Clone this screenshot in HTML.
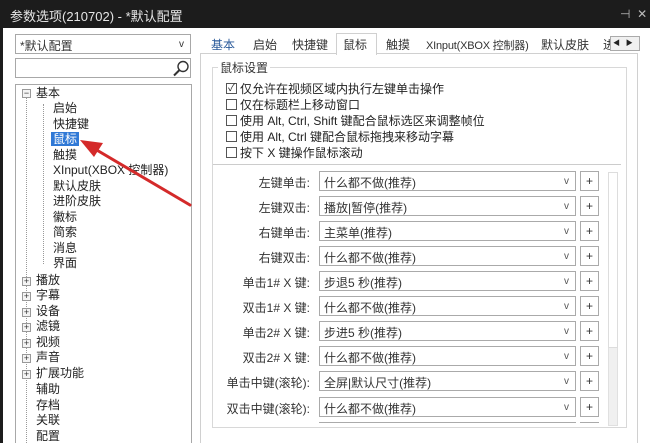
<!DOCTYPE html>
<html><head><meta charset="utf-8"><style>
*{box-sizing:border-box;margin:0;padding:0}
html,body{width:650px;height:443px;overflow:hidden}
body{background:#fff;font-family:"Liberation Sans","Noto Sans CJK SC",sans-serif;font-size:12px;color:#222;position:relative}
.a{position:absolute;white-space:nowrap}
.title{left:0;top:0;width:650px;height:28px;background:#1c1c1c;color:#e6e6e6;font-size:13px;padding:6px 0 0 10px}
.box{position:absolute;border:1px solid #a8a8a8;background:#fff}
.t{position:absolute;font-size:12px;line-height:14px}
.pm{position:absolute;width:9px;height:9px;border:1px solid #999;background:#f4f4f4;font-size:9px;line-height:7px;text-align:center;color:#333}
.tab{position:absolute;top:36px;font-size:12px;color:#333}
.cb{position:absolute;width:11px;height:11px;border:1px solid #555;background:#fff}
.lbl{position:absolute;width:120px;text-align:right;font-size:12px;color:#333}
.sel{position:absolute;left:319px;width:257px;height:20px;border:1px solid #aaa;background:#fff;font-size:12px;padding:2px 4px;color:#333}
.sel b{position:absolute;right:6px;top:4px;font-weight:normal;font-size:10px;color:#555}
.pl{position:absolute;left:580px;width:19px;height:20px;border:1px solid #aaa;background:#fff;text-align:center;font-size:12px;line-height:18px;color:#333}
</style></head><body>
<div class="a title">参数选项(210702) - *默认配置</div>
<div class="a" style="left:620px;top:7px;color:#bbb;font-size:12px">⊣ &nbsp;✕</div>
<div class="a" style="left:0;top:28px;width:3px;height:415px;background:#1c1c1c"></div>

<div class="box" style="left:15px;top:34px;width:176px;height:20px;padding:2px 4px;color:#333">*默认配置<span style="position:absolute;right:6px;top:4px;font-size:10px">v</span></div>
<div class="box" style="left:15px;top:58px;width:176px;height:20px"></div>
<svg class="a" style="left:172px;top:60px" width="18" height="17"><circle cx="11" cy="6.5" r="5" fill="none" stroke="#333" stroke-width="1.4"/><line x1="7.5" y1="10" x2="2" y2="15.5" stroke="#333" stroke-width="2"/></svg>
<div class="box" style="left:15px;top:84px;width:177px;height:359px;border-bottom:none"></div>
<div class="a" style="left:26px;top:98px;height:345px;border-left:1px dotted #999"></div>
<div class="a" style="left:43px;top:104px;height:160px;border-left:1px dotted #999"></div>
<div class="pm" style="left:22px;top:89px">−</div>
<div class="t" style="left:36px;top:86px">基本</div>
<div class="t" style="left:53px;top:101px">启始</div>
<div class="t" style="left:53px;top:117px">快捷键</div>
<div class="t" style="left:51px;top:132px;background:#3079d6;color:#fff;padding:0 2px">鼠标</div>
<div class="t" style="left:53px;top:148px">触摸</div>
<div class="t" style="left:53px;top:163px">XInput(XBOX 控制器)</div>
<div class="t" style="left:53px;top:179px">默认皮肤</div>
<div class="t" style="left:53px;top:194px">进阶皮肤</div>
<div class="t" style="left:53px;top:210px">徽标</div>
<div class="t" style="left:53px;top:225px">简索</div>
<div class="t" style="left:53px;top:241px">消息</div>
<div class="t" style="left:53px;top:256px">界面</div>
<div class="pm" style="left:22px;top:277px">+</div><div class="t" style="left:36px;top:273px">播放</div>
<div class="pm" style="left:22px;top:292px">+</div><div class="t" style="left:36px;top:288px">字幕</div>
<div class="pm" style="left:22px;top:308px">+</div><div class="t" style="left:36px;top:304px">设备</div>
<div class="pm" style="left:22px;top:323px">+</div><div class="t" style="left:36px;top:319px">滤镜</div>
<div class="pm" style="left:22px;top:339px">+</div><div class="t" style="left:36px;top:335px">视频</div>
<div class="pm" style="left:22px;top:354px">+</div><div class="t" style="left:36px;top:350px">声音</div>
<div class="pm" style="left:22px;top:370px">+</div><div class="t" style="left:36px;top:366px">扩展功能</div>
<div class="t" style="left:36px;top:382px">辅助</div>
<div class="t" style="left:36px;top:398px">存档</div>
<div class="t" style="left:36px;top:413px">关联</div>
<div class="t" style="left:36px;top:429px">配置</div>

<div class="a" style="left:200px;top:53px;width:438px;height:390px;border:1px solid #d0d0d0;border-bottom:none"></div>
<div class="a" style="left:336px;top:33px;width:41px;height:22px;border:1px solid #d0d0d0;border-bottom:none;background:#fff"></div>
<div class="tab" style="left:211px;color:#2a5a9a">基本</div>
<div class="tab" style="left:253px">启始</div>
<div class="tab" style="left:292px">快捷键</div>
<div class="tab" style="left:343px">鼠标</div>
<div class="tab" style="left:386px">触摸</div>
<div class="tab" style="left:426px;font-size:11px;top:37px;letter-spacing:-0.2px">XInput(XBOX 控制器)</div>
<div class="tab" style="left:541px">默认皮肤</div>
<div class="tab" style="left:603px;width:7px;overflow:hidden">进</div>
<div class="a" style="left:610px;top:36px;width:30px;height:15px;border:1px solid #aaa;background:#f0f0f0;font-size:7px;line-height:13px;color:#222">&nbsp;◀ &nbsp;&nbsp;▶</div>

<div class="a" style="left:212px;top:67px;width:415px;height:361px;border:1px solid #d8d8d8"></div>
<div class="a" style="left:218px;top:59px;background:#fff;padding:0 2px;font-size:12px;color:#333">鼠标设置</div>
<div class="cb" style="left:226px;top:83px;font-size:10px;line-height:9px;text-align:center">✓</div><div class="a" style="left:240px;top:80px">仅允许在视频区域内执行左键单击操作</div>
<div class="cb" style="left:226px;top:99px"></div><div class="a" style="left:240px;top:96px">仅在标题栏上移动窗口</div>
<div class="cb" style="left:226px;top:115px"></div><div class="a" style="left:240px;top:112px">使用 Alt, Ctrl, Shift 键配合鼠标选区来调整帧位</div>
<div class="cb" style="left:226px;top:131px"></div><div class="a" style="left:240px;top:128px">使用 Alt, Ctrl 键配合鼠标拖拽来移动字幕</div>
<div class="cb" style="left:226px;top:147px"></div><div class="a" style="left:240px;top:144px">按下 X 键操作鼠标滚动</div>
<div class="a" style="left:213px;top:164px;width:408px;border-top:1px solid #ccc"></div>

<div class="lbl" style="left:190px;top:174px">左键单击:</div><div class="sel" style="top:171px">什么都不做(推荐)<b>v</b></div><div class="pl" style="top:171px">+</div>
<div class="lbl" style="left:190px;top:199px">左键双击:</div><div class="sel" style="top:196px">播放|暂停(推荐)<b>v</b></div><div class="pl" style="top:196px">+</div>
<div class="lbl" style="left:190px;top:224px">右键单击:</div><div class="sel" style="top:221px">主菜单(推荐)<b>v</b></div><div class="pl" style="top:221px">+</div>
<div class="lbl" style="left:190px;top:249px">右键双击:</div><div class="sel" style="top:246px">什么都不做(推荐)<b>v</b></div><div class="pl" style="top:246px">+</div>
<div class="lbl" style="left:190px;top:274px">单击1# X 键:</div><div class="sel" style="top:271px">步退5 秒(推荐)<b>v</b></div><div class="pl" style="top:271px">+</div>
<div class="lbl" style="left:190px;top:299px">双击1# X 键:</div><div class="sel" style="top:296px">什么都不做(推荐)<b>v</b></div><div class="pl" style="top:296px">+</div>
<div class="lbl" style="left:190px;top:324px">单击2# X 键:</div><div class="sel" style="top:321px">步进5 秒(推荐)<b>v</b></div><div class="pl" style="top:321px">+</div>
<div class="lbl" style="left:190px;top:349px">双击2# X 键:</div><div class="sel" style="top:346px">什么都不做(推荐)<b>v</b></div><div class="pl" style="top:346px">+</div>
<div class="lbl" style="left:190px;top:374px">单击中键(滚轮):</div><div class="sel" style="top:371px">全屏|默认尺寸(推荐)<b>v</b></div><div class="pl" style="top:371px">+</div>
<div class="lbl" style="left:190px;top:400px">双击中键(滚轮):</div><div class="sel" style="top:397px">什么都不做(推荐)<b>v</b></div><div class="pl" style="top:397px">+</div>
<div class="a" style="left:319px;top:422px;width:257px;height:5px;border-top:1px solid #aaa"></div>
<div class="a" style="left:580px;top:422px;width:19px;height:5px;border-top:1px solid #aaa"></div>
<div class="a" style="left:608px;top:172px;width:10px;height:254px;background:#f0f0f0;border:1px solid #e0e0e0"></div>
<div class="a" style="left:608px;top:172px;width:10px;height:176px;background:#fff;border:1px solid #ddd"></div>

<svg class="a" style="left:0;top:0" width="650" height="443"><line x1="190" y1="205" x2="95" y2="149" stroke="#d42a2a" stroke-width="3" stroke-linecap="round"/><polygon points="80,140 103,143 94,157" fill="#d42a2a"/></svg>
</body></html>
